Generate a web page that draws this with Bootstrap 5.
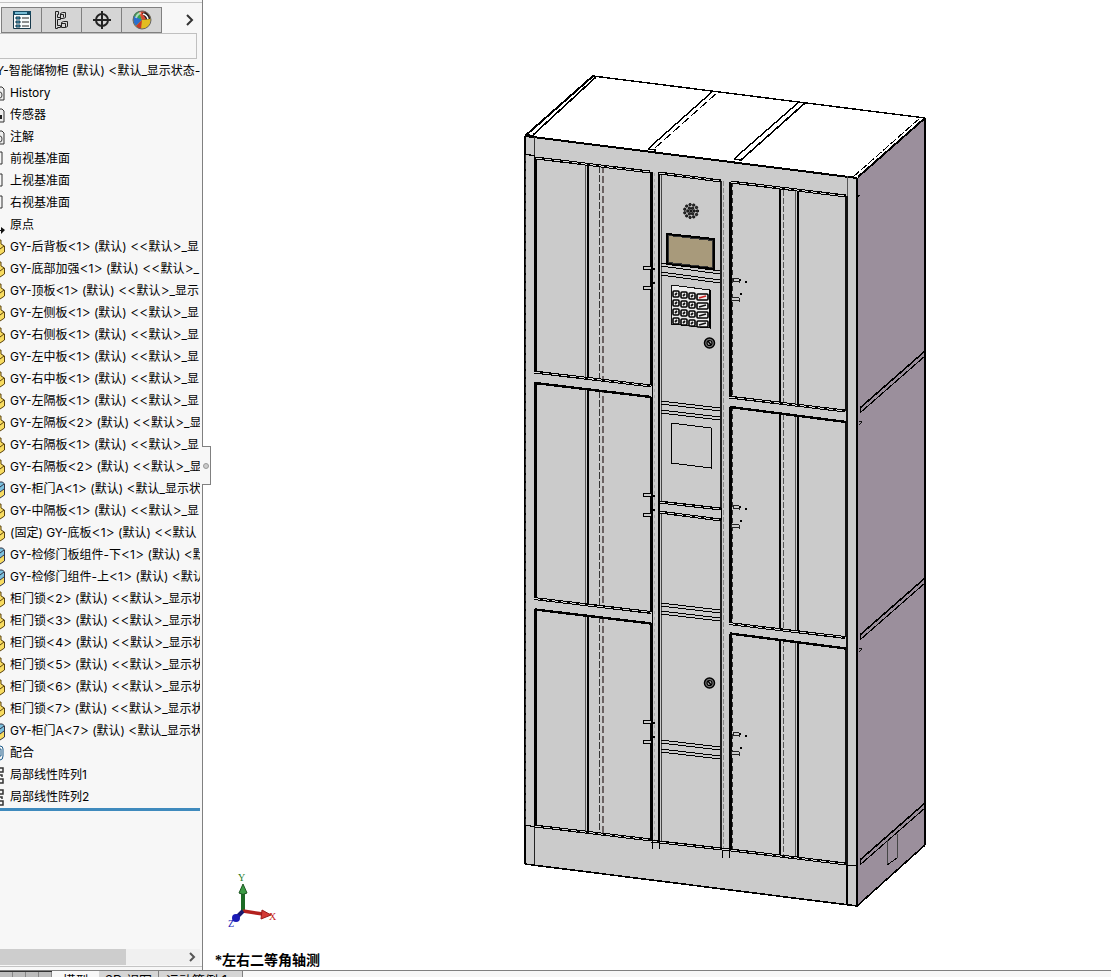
<!DOCTYPE html>
<html lang="zh-CN">
<head>
<meta charset="utf-8">
<meta name="viewport" content="width=device-width, initial-scale=1">
<title>智能储物柜</title>
<link href="https://cdn.jsdelivr.net/npm/bootstrap@5.3.0/dist/css/bootstrap.min.css" rel="stylesheet">
<style>
body{font-family:Inter,"Noto Sans CJK SC",sans-serif;font-size:12px;color:#000;background:#fff}
.work-area{min-height:0}
.side-panel{width:203px;background:#f7f7f7;border-right:1px solid #808080}
.tool-row{margin-top:2px;padding:4px 2px 0 1px;height:31px;border-top:1px solid #c4c4c4}
.tool-tabs{border:1px solid #808080;border-bottom-width:2px;background:#d5d5d5;height:27px}
.tool-tabs button{width:40px;border:0;border-right:1px solid #808080;background:transparent}
.tool-tabs button:last-child{border-right:0;width:39px}
.more-btn{border:0;background:transparent}
.filter-box{height:26px;width:197px;border:1px solid #c0c0c0;border-left:0;background:#f7f7f7;border-radius:0;outline:0}
.tree-list{width:200px;margin-top:1px;border-bottom:3px solid #3f8abd}
.tree-list li{height:22px;line-height:22px;white-space:pre}
.tree-list a{color:#000}
.tree-ico{width:10px;height:22px;flex:none}
.root-ico{width:8px;margin-left:-12px}
.ang{font-size:14px;font-weight:300;line-height:1}
.scroll-track{height:16px;width:200px;background:#f0f0f0;margin-bottom:1px}
.scroll-thumb{width:63%;background:#cdcdcd}
.split-line{height:1px;background:#c4c4c4;margin-bottom:3px}
.fly-handle{left:202px;top:446px;width:9px;height:39px;border:1px solid #808080;border-left:0;background:#f7f7f7}
.fly-handle span{width:6px;height:6px;border:1px solid #999;background:#ccc}
.view-name{left:12px;bottom:0;font:bold 14px/18px "Liberation Serif","Noto Sans CJK SC",sans-serif}
.sheet-tabs{height:7px;border-top:1px solid #808080;background:#f7f7f7}
.sheet-tabs button{border:0;border-right:1px solid #808080;background:#d5d5d5;height:18px;line-height:10px;font-size:13px;white-space:nowrap;padding:0}
.nav-btns{width:52px;height:7px;background:#bdbdbd;border-top:1px solid #333}
.nav-btns i{flex:1;border-right:1px solid #888}
.sheet-tabs .on-sheet{background:#f7f7f7;border:0;width:47px}
.sheet-tabs .view-sheet{width:60px}
.sheet-tabs .study-sheet{width:84px;padding-right:8px}
</style>
</head>
<body class="vh-100 d-flex flex-column overflow-hidden">
<main class="work-area d-flex flex-grow-1 position-relative">
  <aside class="side-panel d-flex flex-column flex-shrink-0 overflow-hidden">
    <div class="tool-row d-flex justify-content-between">
      <div class="tool-tabs d-flex">
        <button class="p-0 d-flex align-items-center justify-content-center" aria-label="特征树"><svg width="18" height="18"><path d="M.5.5h17v17H.5z" fill="#f7fbfc" stroke="#17394b"/><path d="M0 0h18v4H0z" fill="#174b63"/><path d="M2 2h12" stroke="#77bcd5" stroke-width="2"/><path d="M3 6h4v2H3zm0 4h4v2H3zm0 4h4v2H3z" fill="#4ba7ca" stroke="#17394b"/><path d="M9 7h7M9 11h7M9 15h7" stroke="#222"/></svg></button>
        <button class="p-0 d-flex align-items-center justify-content-center" aria-label="配置"><svg width="18" height="18" fill="none" stroke="#222"><path d="M2.500 .5h3v3h-1v3h3v2h-3v6h3v2h-3v1h-2zM7.500 2.500l2-1h3v5l-2 1h-3zM8.500 11.500l2-1h4v5l-2 1h-4z"/><path d="M7.500 3.500h3v3M8.500 12.500h4v4"/></svg></button>
        <button class="p-0 d-flex align-items-center justify-content-center" aria-label="尺寸"><svg width="20" height="20" fill="none" stroke="#222" stroke-width="2"><circle cx="10" cy="10" r="6"/><path d="M10 1v18M1 10h18"/></svg></button>
        <button class="p-0 d-flex align-items-center justify-content-center" aria-label="外观"><svg width="20" height="20"><circle cx="10" cy="10" r="9" fill="#e2bd22"/><path d="M10 10 7 1a9 9 0 0 0-6 9l3 1z" fill="#38a650"/><path d="M2 6a9 9 0 0 0 2 10l6-6z" fill="#2c70cc"/><path d="M10 10 7 2a9 9 0 0 1 6-1l6 7z" fill="#d94a34"/><path d="m10 3 4-1q4 3 4 7l-8 1 4-1z" fill="#282020"/><path d="M11 4q4 1 5 5" stroke="#fff" fill="none" stroke-width="1.5"/><path d="M4 16a9 9 0 0 0 5 3l1-9z" fill="#c73b2b"/><circle cx="10" cy="10" r="9" fill="none" stroke="#666"/><path d="M4 8q1-4 5-5" stroke="#fff" stroke-opacity=".6" fill="none" stroke-width="2"/></svg></button>
      </div>
      <button class="more-btn p-0 me-1" aria-label="更多"><svg width="12" height="14"><path d="m3 1 5 5-5 5" fill="none" stroke="#333" stroke-width="2"/></svg></button>
    </div>
    <input class="filter-box" aria-label="筛选">
    <ul class="tree-list list-unstyled mb-0 overflow-hidden" id="tree"></ul>
    <div class="flex-grow-1"></div>
    <div class="scroll-track d-flex flex-shrink-0"><div class="scroll-thumb"></div><svg class="ms-auto" width="14" height="16"><path d="m4 4 4 4-4 4" fill="none" stroke="#555" stroke-width="2"/></svg></div>
    <div class="split-line flex-shrink-0"></div>
  </aside>
  <section class="flex-grow-1 position-relative overflow-hidden">
    <svg id="model" width="100%" height="100%" viewBox="204 0 908 970" preserveAspectRatio="xMinYMin meet" role="img" aria-label="储物柜模型"></svg>
    <div class="view-name position-absolute">*左右二等角轴测</div>
  </section>
  <button class="fly-handle position-absolute p-0 d-flex align-items-center justify-content-center" aria-label="收起"><span class="rounded-circle"></span></button>
</main>
<footer class="sheet-tabs d-flex flex-shrink-0 overflow-hidden">
  <div class="nav-btns d-flex flex-shrink-0"><i></i><i></i><i></i><i></i></div>
  <button class="on-sheet">模型</button><button class="view-sheet">3D 视图</button><button class="study-sheet">运动算例 1</button>
</footer>
<script src="https://cdn.jsdelivr.net/npm/bootstrap@5.3.0/dist/js/bootstrap.bundle.min.js"></script>
<script>
const icons={
 f:'<path d="M0 5h2l2 2v11H0" fill="#eee" stroke="#333"/><path d="M0 10q2 0 2 3t-2 3" fill="none" stroke="#444"/>',
 s:'<path d="M0 5h2l2 2v11H0" fill="#eee" stroke="#333"/><path d="M0 11h2v4H0z" fill="#222"/>',
 p:'<path d="M0 4h2v12H0" fill="none" stroke="#333"/>',
 o:'<path d="M0 16h1v-3l4 3-4 4v-3H0z" fill="#111"/>',
 y:'<path d="M0 4h1v4l3 1.500v7L0 19z" fill="#f8dc60"/><path d="M0 4h1v4l3.500 2v6L0 19M0 13l4-3" fill="none" stroke="#5a4310"/>',
 b:'<path d="M0 4h3l1 2v5l-4 3z" fill="#7cc0de"/><path d="m0 14 4-3v6l-4 3z" fill="#f8dc60"/><path d="M0 4h2.500l2 2v11L0 20M0 9l4-3M0 14l4-3" fill="none" stroke="#334"/>',
 m:'<path d="M0 4q3 0 3 3v7q0 4-3 4M0 7h1v7H0" fill="none" stroke="#1b5a8a"/>',
 l:'<path d="M0 4h3v4H0m0 3h2v2m-2 2h3v4H0" fill="none" stroke="#333" stroke-width="1.500"/>'};
const gy=(n,k=1)=>`y|GY-${n}<${k}> (默认) <<默认>_${n==='底部加强'?'':n==='顶板'?'显示':'显'}`;
const rows=['t|Y-智能储物柜 (默认) <默认_显示状态-','f|History','s|传感器','f|注解','p|前视基准面','p|上视基准面','p|右视基准面','o|原点',
 gy('后背板'),gy('底部加强'),gy('顶板'),gy('左侧板'),gy('右侧板'),gy('左中板'),gy('右中板'),gy('左隔板'),gy('左隔板',2),gy('右隔板'),gy('右隔板',2),
 'b|GY-柜门A<1> (默认) <默认_显示状',gy('中隔板'),'y|(固定) GY-底板<1> (默认) <<默认','b|GY-检修门板组件-下<1> (默认) <默','b|GY-检修门组件-上<1> (默认) <默认',
 ...[2,3,4,5,6,7].map(k=>`y|柜门锁<${k}> (默认) <<默认>_显示状`),'b|GY-柜门A<7> (默认) <默认_显示状','m|配合','l|局部线性阵列1','l|局部线性阵列2'];
document.getElementById('tree').innerHTML=rows.map(r=>{
 const [k,t]=[r[0],r.slice(2)];
 const h=t.replace(/[<>]/g,c=>`<span class="ang">${c==='<'?'&lt;':'&gt;'}</span>`);
 return `<li><a href="#" class="d-flex text-decoration-none">${k==='t'?'<span class="root-ico flex-shrink-0"></span>':`<svg class="tree-ico">${icons[k]}</svg>`}<span>${h}</span></a></li>`}).join('');

// Cabinet drawing
let s='';
const poly=(p,f,st='none',w=1)=>s+=`<polygon points="${p}" fill="${f}" stroke="${st}" stroke-width="${w}"/>`;
const ln=(a,b,c,d,w=1,col='#000',dash='')=>s+=`<path d="M${a} ${b}L${c} ${d}" stroke="${col}" stroke-width="${w}" ${dash?`stroke-dasharray="${dash}"`:''} fill="none"/>`;
const dashed=(a,b,c,d)=>{ln(a,b,c,d,3,'#000');ln(a,b,c,d,1,'#ddd','6 3')};
const twin=(a,b,c,d)=>{ln(a,b,c,d);ln(a,b+3,c,d+3)};
const G='#cbcbcb';
s+='<g shape-rendering="crispEdges">';
poly('858,178 926,118 926,845 858,905','#9b8f9c');
poly('526,136 594,76 926,118 858,178','#fff');
poly('526,136 858,178 858,906 526,864',G);
ln(526,136,594,76,2);ln(534,135,597,77,1.6);ln(594,76,926,118,1.4);
ln(526,135,535,136,2);
ln(650,148,713,92,1.4);ln(656,148,719,92,1,'#000','9 3');ln(649,149,657,150,1.5);
ln(736,158,800,102,1.4);ln(742,160,806,103,1.6);ln(735,159,742,160,1.5);
ln(854,177,921,118,1,'#000','8 2');ln(859,177,926,118,2);
ln(526,136,858,178,2);ln(526,136,526,864,1.2);ln(526,864,858,906,1.6);
ln(858,906,926,845,1.6);ln(926,118,926,845,1.2);ln(858,178,858,906,1.8);
ln(535,137,535,155,1,'#333');ln(848,176,848,196,1,'#555');ln(526,154,536,156,1.2);
ln(535,825,535,864,1,'#222');ln(848,866,848,904,1.3);ln(526,825,537,827,1);ln(847,865,858,866,1);
// uprights
ln(526,155,526,825,1,'#333','6 2');ln(536,157,536,826,3);
ln(586,164,586,831,1,'#555');ln(589,164,589,831,1.3);
ln(600,166,600,833,1,'#333','7 2');ln(604,166,604,833,1.6,'#6b6262','7 3');
ln(652,172,652,841,3);ln(655,173,655,842,1,'#aaa','3 3');
ln(660,172,660,842,1.4);ln(662,174,662,842,1,'#444');
ln(722,181,722,850,2,'#222');ln(724,181,724,850,1,'#888','5 2');
ln(731,182,731,850,3);ln(733,182,733,850,1,'#333','5 3');
ln(781,189,781,855,1.2);ln(784,190,784,855,1,'#555','6 2');
ln(796,190,796,857,1,'#555');ln(799,191,799,857,1.2);
ln(847,196,847,865,3,'#111');
dashed(537,158,651,172);dashed(660,173,722,181);dashed(732,182,847,196);
// rails between doors
for(const d of [0,226.5]){
 poly(`535,${371+d} 653,${386+d} 653,${397+d} 535,${382+d}`,G);
 dashed(535,372+d,652,386+d);ln(536,383+d,652,397+d,2.4);
 poly(`730,${397+d} 847,${411+d} 847,${421+d} 730,${407+d}`,G);
 dashed(730,397+d,846,411+d);ln(731,407+d,847,422+d,2.4);
}
dashed(536,826,652,840);dashed(652,841,732,850);dashed(732,850,847,864);
// control column
twin(662,263,721,271);twin(662,272,721,280);
twin(662,401,721,408);twin(662,410,721,417);
twin(662,603,721,610);twin(662,611,721,618);
twin(662,740,721,747);twin(662,749,721,756);
poly('660,501 722,509 722,520 660,512',G);dashed(660,502,722,509);dashed(660,512,722,520);ln(660,501,660,513);ln(722,508,722,520);
poly('672,423 712,428 712,468 672,463','none','#000');
poly('668,234 715,239 715,269 668,264','#333','#000',2);poly('670,236 713,241 713,267 670,262','#a89a7b');
poly('672,285 711,290 711,328 672,324','#eee','#111');
ln(711,290,711,328,2);
s+='</g><g>';
for(let r=0;r<4;r++)for(let c=0;c<4;c++){const x=674+c*8,y=291+r*9+c,w=c===3?11:6;
 s+=`<rect x="${x}" y="${y}" width="${w}" height="6" rx="1" fill="#eee" stroke="#000" stroke-width="1.600"/>`;
 ln(x+2,y+4,x+w-2,y+2,1.8,(c===3&&r===0)?'#c22':'#111')}
s+='</g><g shape-rendering="crispEdges">';
ln(653,841,653,849);ln(660,841,660,849);ln(723,850,723,858);ln(730,851,730,858);
// latches
for(const d of [0,227,454]){
 for(const y of [266,286])poly(`644,${y+d} 652,${y+1+d} 652,${y+4+d} 644,${y+3+d}`,G,'#000');
 poly(`734,${278+d} 740,${279+d} 740,${282+d} 734,${281+d}`,G,'#222');poly(`732,${297+d} 740,${298+d} 740,${301+d} 732,${300+d}`,G,'#222');
 for(const [x,y] of [[654,268],[654,282],[740,279],[746,281],[741,293]])s+=`<rect x="${x}" y="${y+d}" width="2" height="2"/>`;
}
// side panel seams
for(const y of [408,635,860]){ln(861,y,926,y-57,1.6);ln(862,y+4,926,y-52,1.2);ln(861,y,861,y+5)}
for(const y of [421,648])s+=`<path d="M860 ${y}h2v2l-2 2" fill="none" stroke="#111"/>`;
ln(888,840,888,865,1,'#444');ln(888,865,898,858,1);ln(898,834,898,858,1,'#444');
ln(858,197,861,195,1.2);
s+='</g>';
for(const y of [343,683])s+=`<circle cx="710.5" cy="${y}" r="5" fill="#777" stroke="#000" stroke-width="1.500"/><circle cx="710.5" cy="${y}" r="2.500" fill="#bbb" stroke="#000" stroke-width="1.200"/><path d="M709 ${y-2}l3 4" stroke="#000" stroke-width="1.500"/>`;
for(const [r,n] of [[0,1],[3.2,6],[6.5,11]])for(let i=0;i<n;i++){const a=i*2*Math.PI/n;s+=`<circle cx="${(692+r*Math.cos(a)).toFixed(1)}" cy="${(211+r*Math.sin(a)).toFixed(1)}" r="1.2" fill="#333" stroke="#000" stroke-width=".8"/>`}
// orientation triad
s+=`<path d="M244 912V892" stroke="#1c6b25" stroke-width="4"/><path d="m244 884-4 9q4 3 8 0z" fill="#3c9c45" stroke="#1c5522"/>
<path d="m244 911 20 3" stroke="#b3201d" stroke-width="3.5"/><path d="m263 910 9 5-10 4z" fill="#d43a34" stroke="#9a1a18"/>
<path d="m244 911-6 6" stroke="#191970" stroke-width="4"/><circle cx="237" cy="918" r="4" fill="#1b1bb5"/>
<g font-family="Liberation Serif,serif" font-size="10"><text x="239" y="881" fill="#1c7a25">Y</text><text x="270" y="920" fill="#c42220">X</text><text x="229" y="927" fill="#1b1bb5">Z</text></g>`;
document.getElementById('model').innerHTML=s;
</script>
</body>
</html>
